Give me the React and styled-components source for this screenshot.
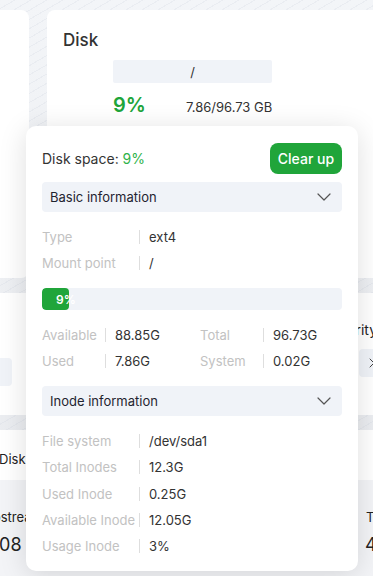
import React from "react";
import styled, { createGlobalStyle } from "styled-components";
import { ChevronDown, ChevronRight } from "lucide-react";

const GlobalStyle = createGlobalStyle`
  html, body {
    margin: 0;
    padding: 0;
    width: 373px;
    height: 576px;
    overflow: hidden;
    font-family: Inter, "Noto Sans", sans-serif;
  }
  body {
    background:
      repeating-linear-gradient(150deg, rgba(255,255,255,0) 0 7px, rgba(210,215,225,0.28) 7px 8px),
      linear-gradient(#f3f5f8, #e8eaee);
  }
`;

const GREEN = "#20a53a";

const Page = styled.div`
  position: relative;
  width: 373px;
  height: 576px;
  overflow: hidden;
`;

const Row = styled.div`
  display: flex;
  gap: ${(p) => p.gap || 0}px;
  height: ${(p) => p.h}px;
  margin-top: ${(p) => p.mt || 0}px;
`;

const Card = styled.div`
  background: ${(p) => p.bg || "#fff"};
  width: ${(p) => (p.w ? `${p.w}px` : "auto")};
  flex: ${(p) => (p.w ? "none" : 1)};
  border-radius: ${(p) => p.radius || "0"};
  overflow: hidden;
  position: relative;
`;

const DiskCard = styled(Card)`
  padding: 20px 0 0 16px;
`;

const Title = styled.div`
  font-size: 17px;
  color: #333;
  font-weight: 500;
  line-height: 20px;
`;

const MountBar = styled.div`
  margin: 10px 0 0 50px;
  width: 159px;
  height: 23px;
  background: #f0f3f8;
  border-radius: 2px;
  font-size: 13px;
  color: #333;
  display: flex;
  align-items: center;
  justify-content: center;
`;

const UsageLine = styled.div`
  display: flex;
  align-items: baseline;
  margin: 10px 0 0 50px;
`;

const BigPercent = styled.div`
  font-size: 20px;
  font-weight: 600;
  color: ${GREEN};
  width: 73px;
`;

const UsageText = styled.div`
  font-size: 13px;
  color: #333;
`;

const EdgeText = styled.div`
  position: absolute;
  font-size: ${(p) => p.size || 13}px;
  color: #222;
  top: ${(p) => p.top}px;
  left: ${(p) => p.left}px;
  white-space: nowrap;
`;

const GhostBox = styled.div`
  position: absolute;
  top: ${(p) => p.top}px;
  left: ${(p) => p.left}px;
  width: ${(p) => p.w}px;
  height: 28px;
  background: #f0f3f8;
  border-radius: 4px;
  display: flex;
  align-items: center;
  padding-left: 5px;
  color: #444;
`;

const Popover = styled.div`
  position: absolute;
  left: 26px;
  top: 126px;
  width: 332px;
  height: 445px;
  box-sizing: border-box;
  padding: 17px 16px 16px;
  background: #fff;
  border-radius: 10px;
  box-shadow: 0 4px 28px rgba(0, 0, 0, 0.13);
  display: flex;
  flex-direction: column;
`;

const HeadRow = styled.div`
  display: flex;
  align-items: center;
  justify-content: space-between;
  height: 31px;
`;

const HeadTitle = styled.div`
  font-size: 14px;
  color: #333;
  span {
    color: #2fb34a;
  }
`;

const ClearButton = styled.button`
  border: none;
  background: ${GREEN};
  color: #fff;
  font-family: inherit;
  font-size: 14px;
  font-weight: 500;
  height: 31px;
  width: 72px;
  border-radius: 8px;
  padding: 0;
`;

const Section = styled.div`
  margin-top: ${(p) => p.mt}px;
  height: 30px;
  flex: none;
  background: #f0f3f8;
  border-radius: 4px;
  display: flex;
  align-items: center;
  justify-content: space-between;
  padding: 0 6px 0 8px;
  font-size: 13px;
  color: #1f2430;
`;

const List = styled.div`
  margin-top: 12px;
  display: flex;
  flex-direction: column;
`;

const InfoRow = styled.div`
  display: flex;
  align-items: center;
  height: ${(p) => p.h || 26}px;
  font-size: 13px;
`;

const Label = styled.div`
  width: ${(p) => p.w}px;
  color: #c2c2c2;
  white-space: nowrap;
`;

const Sep = styled.div`
  width: 1px;
  height: 14px;
  background: #dedede;
  margin-right: 9px;
`;

const Value = styled.div`
  color: #333;
`;

const Progress = styled.div`
  margin-top: 12px;
  height: 22px;
  flex: none;
  background: #f0f3f8;
  border-radius: 4px;
  overflow: hidden;
`;

const Fill = styled.div`
  height: 100%;
  background: ${GREEN};
  border-radius: 4px;
  color: #fff;
  font-size: 12px;
  font-weight: 600;
  display: flex;
  align-items: center;
  padding-left: 14px;
  box-sizing: border-box;
  white-space: nowrap;
`;

const Grid = styled.div`
  margin-top: 12px;
  display: grid;
  grid-template-columns: 158px 142px;
`;

const basic = [
  ["Type", "ext4"],
  ["Mount point", "/"],
];

const sizes = [
  ["Available", "88.85G", "Total", "96.73G"],
  ["Used", "7.86G", "System", "0.02G"],
];

const inode = [
  ["File system", "/dev/sda1"],
  ["Total Inodes", "12.3G"],
  ["Used Inode", "0.25G"],
  ["Available Inode", "12.05G"],
  ["Usage Inode", "3%"],
];

export default function App() {
  const used = 9;
  return (
    <Page>
      <GlobalStyle />
      <Row h={268} mt={10} gap={18}>
        <Card w={29} radius="0 8px 8px 0" />
        <DiskCard radius="8px 0 0 8px">
          <Title>Disk</Title>
          <MountBar>/</MountBar>
          <UsageLine>
            <BigPercent>{used}%</BigPercent>
            <UsageText>7.86/96.73 GB</UsageText>
          </UsageLine>
        </DiskCard>
      </Row>
      <Row h={122} mt={15}>
        <Card>
          <GhostBox top={65} left={-16} w={23} />
          <EdgeText top={28} left={322} size={14}>Security</EdgeText>
          <GhostBox top={56} left={359} w={20}>
            <ChevronRight size={16} strokeWidth={1.5} />
          </GhostBox>
        </Card>
      </Row>
      <Row h={50} mt={15}>
        <Card>
          <EdgeText top={21} left={-1}>Disk</EdgeText>
        </Card>
      </Row>
      <Row h={110}>
        <Card bg="#f3f4f7">
          <EdgeText top={29} left={-17} size={13}>Upstream</EdgeText>
          <EdgeText top={54} left={-13} size={18}>1.08 KB</EdgeText>
          <EdgeText top={29} left={366} size={13}>Total</EdgeText>
          <EdgeText top={54} left={365} size={18}>4</EdgeText>
        </Card>
      </Row>

      <Popover>
        <HeadRow>
          <HeadTitle>
            Disk space: <span>{used}%</span>
          </HeadTitle>
          <ClearButton>Clear up</ClearButton>
        </HeadRow>
        <Section mt={8}>
          Basic information
          <ChevronDown size={24} strokeWidth={1.2} color="#555" />
        </Section>
        <List>
          {basic.map(([k, v]) => (
            <InfoRow key={k}>
              <Label w={97}>{k}</Label>
              <Sep />
              <Value>{v}</Value>
            </InfoRow>
          ))}
        </List>
        <Progress>
          <Fill style={{ width: `${used}%` }}>{used}%</Fill>
        </Progress>
        <Grid>
          {sizes.map(([a, av, b, bv]) => (
            <React.Fragment key={a}>
              <InfoRow>
                <Label w={63}>{a}</Label>
                <Sep />
                <Value>{av}</Value>
              </InfoRow>
              <InfoRow>
                <Label w={63}>{b}</Label>
                <Sep />
                <Value>{bv}</Value>
              </InfoRow>
            </React.Fragment>
          ))}
        </Grid>
        <Section mt={12}>
          Inode information
          <ChevronDown size={24} strokeWidth={1.2} color="#555" />
        </Section>
        <List>
          {inode.map(([k, v]) => (
            <InfoRow key={k} h={26.25}>
              <Label w={97}>{k}</Label>
              <Sep />
              <Value>{v}</Value>
            </InfoRow>
          ))}
        </List>
      </Popover>
    </Page>
  );
}
